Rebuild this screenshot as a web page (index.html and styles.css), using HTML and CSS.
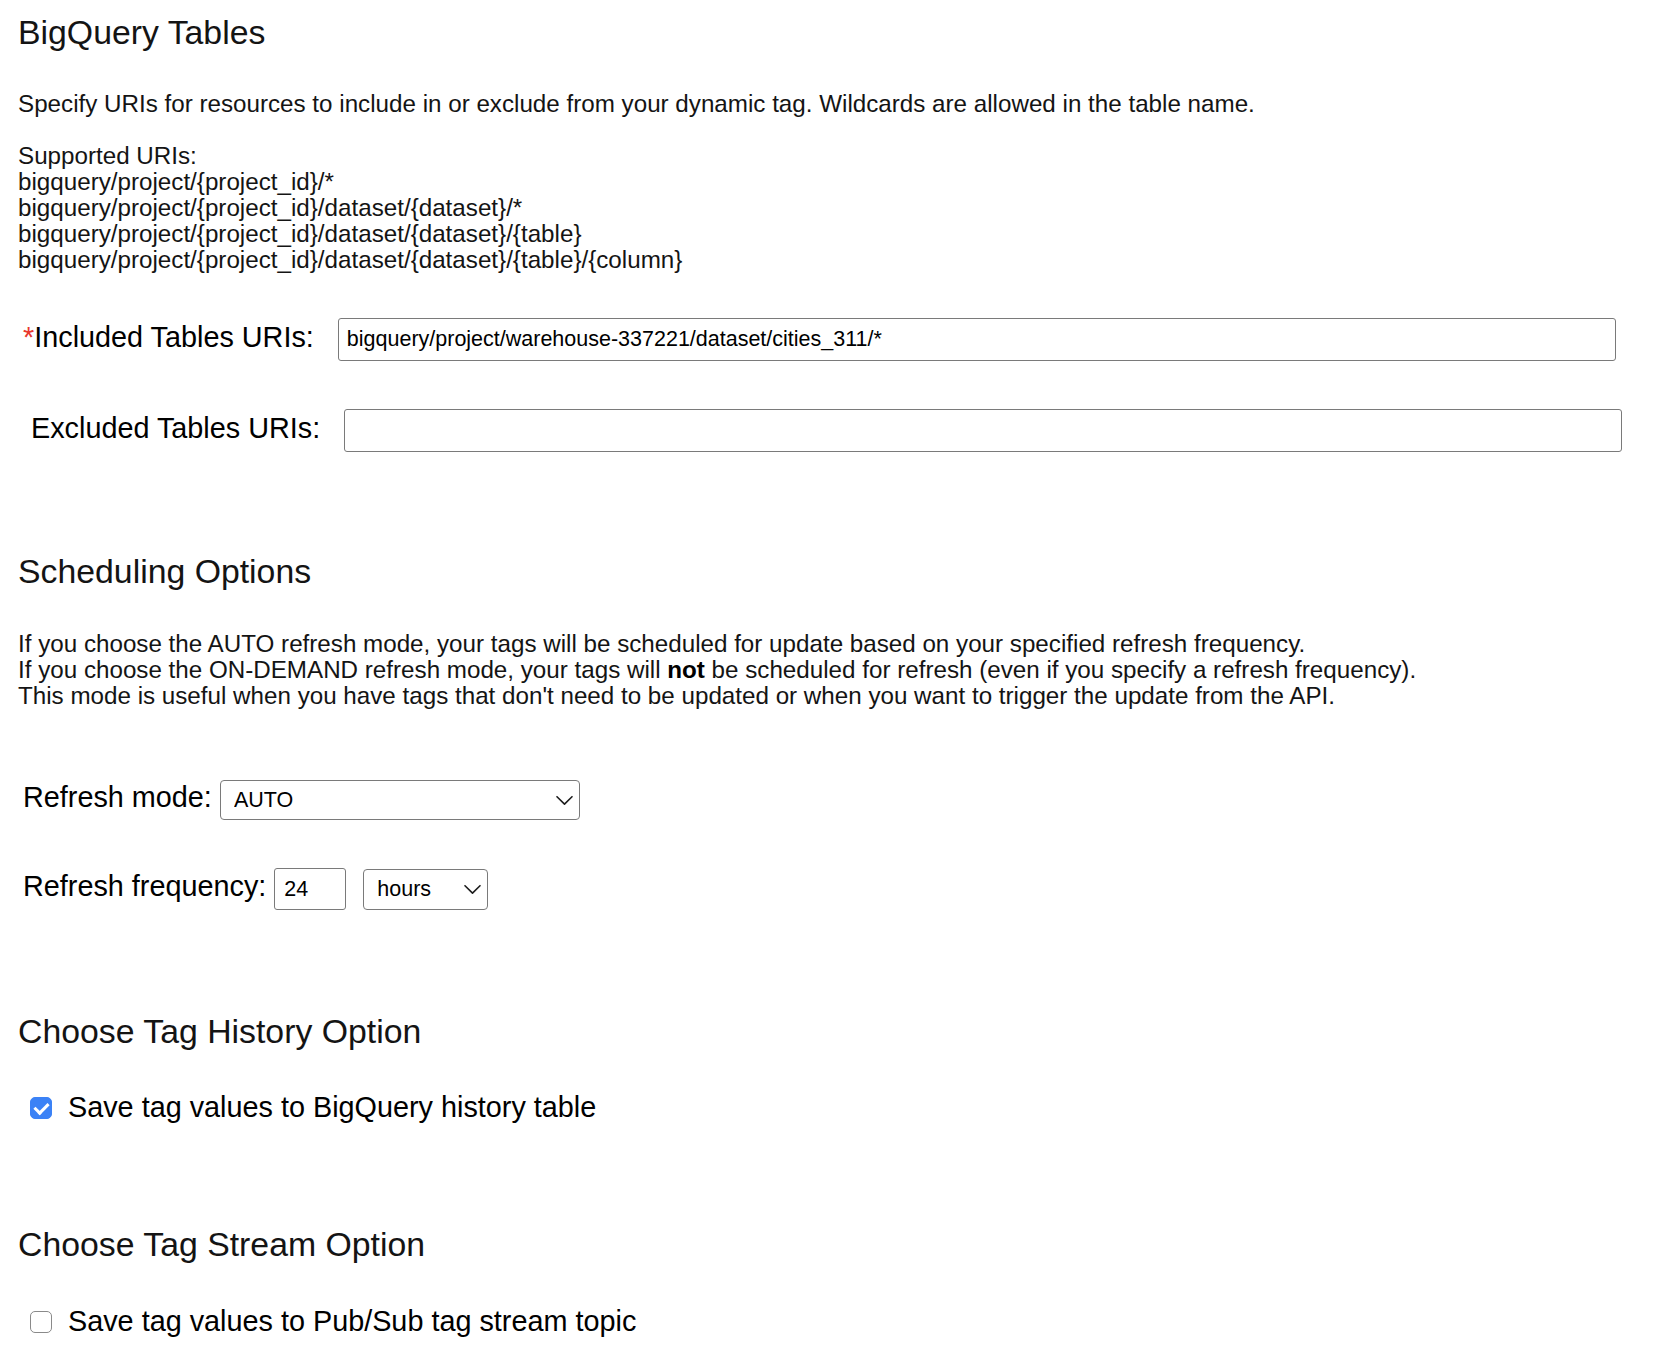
FILE: index.html
```html
<!DOCTYPE html>
<html lang="en">
<head>
<meta charset="utf-8">
<title>BigQuery Tables</title>
<link rel="stylesheet" href="styles.css">
</head>
<body>
<main class="page">
  <section class="section section-tables">
    <h2 class="section-title">BigQuery Tables</h2>
    <p class="section-text">Specify URIs for resources to include in or exclude from your dynamic tag. Wildcards are allowed in the table name.<br><br>Supported URIs:<br>bigquery/project/{project_id}/*<br>bigquery/project/{project_id}/dataset/{dataset}/*<br>bigquery/project/{project_id}/dataset/{dataset}/{table}<br>bigquery/project/{project_id}/dataset/{dataset}/{table}/{column}</p>
    <div class="field-row uri-row uri-row-first">
      <label class="field-label" for="included"><span class="required">*</span>Included Tables URIs:</label>
      <input class="text-input uri-input" id="included" type="text" value="bigquery/project/warehouse-337221/dataset/cities_311/*">
    </div>
    <div class="field-row uri-row">
      <label class="field-label" for="excluded">&nbsp;Excluded Tables URIs:</label>
      <input class="text-input uri-input" id="excluded" type="text" value="">
    </div>
  </section>

  <section class="section section-schedule">
    <h2 class="section-title">Scheduling Options</h2>
    <p class="section-text">If you choose the AUTO refresh mode, your tags will be scheduled for update based on your specified refresh frequency.<br>If you choose the ON-DEMAND refresh mode, your tags will <b>not</b> be scheduled for refresh (even if you specify a refresh frequency).<br>This mode is useful when you have tags that don't need to be updated or when you want to trigger the update from the API.</p>
    <div class="field-row schedule-row schedule-row-first">
      <label class="field-label" for="mode">Refresh mode:</label>
      <span class="select-wrap">
        <select class="select select-mode" id="mode">
          <option selected>AUTO</option>
          <option>ON-DEMAND</option>
        </select>
        <svg class="select-chevron" width="17" height="10" viewBox="0 0 17 10" aria-hidden="true"><path d="M1 1.2 L8.5 8.6 L16 1.2" fill="none" stroke="#1e1e1e" stroke-width="1.6" stroke-linecap="round" stroke-linejoin="round"/></svg>
      </span>
    </div>
    <div class="field-row schedule-row">
      <label class="field-label" for="freq">Refresh frequency:</label>
      <input class="text-input freq-input" id="freq" type="text" value="24">
      <span class="select-wrap">
        <select class="select select-unit" id="unit">
          <option selected>hours</option>
          <option>days</option>
        </select>
        <svg class="select-chevron" width="17" height="10" viewBox="0 0 17 10" aria-hidden="true"><path d="M1 1.2 L8.5 8.6 L16 1.2" fill="none" stroke="#1e1e1e" stroke-width="1.6" stroke-linecap="round" stroke-linejoin="round"/></svg>
      </span>
    </div>
  </section>

  <section class="section section-history">
    <h2 class="section-title">Choose Tag History Option</h2>
    <div class="check-row">
      <input class="checkbox" id="history" type="checkbox" checked>
      <label class="check-label" for="history">Save tag values to BigQuery history table</label>
    </div>
  </section>

  <section class="section section-stream">
    <h2 class="section-title">Choose Tag Stream Option</h2>
    <div class="check-row check-row-stream">
      <input class="checkbox" id="stream" type="checkbox">
      <label class="check-label" for="stream">Save tag values to Pub/Sub tag stream topic</label>
    </div>
  </section>
</main>
</body>
</html>
```

FILE: styles.css
```css
* {
  box-sizing: border-box;
}

html,
body {
  margin: 0;
  background: #ffffff;
}

body {
  font-family: "Liberation Sans", Arial, Helvetica, sans-serif;
  color: #141414;
}

.page {
  padding: 12px 18px 30px;
}

.section-schedule {
  margin-top: 99px;
}

.section-history {
  margin-top: 101px;
}

.section-stream {
  margin-top: 100px;
}

.section-title {
  margin: 0;
  font-size: 33.8px;
  line-height: 40px;
  font-weight: 400;
  color: #141414;
}

.section-text {
  margin: 40px 0 0;
  font-size: 24.2px;
  line-height: 26px;
}

.section-tables .section-text {
  margin-top: 39px;
}

.section-text b {
  font-weight: 700;
  color: #000;
}

.field-row {
  display: flex;
  align-items: center;
  padding-left: 5px;
}

.field-label {
  font-size: 28.8px;
  line-height: 32px;
  padding-bottom: 6px;
  color: #000;
  white-space: pre;
}

.required {
  color: #e8382d;
}

.uri-row {
  margin-top: 48px;
}

.uri-row-first {
  margin-top: 45px;
}

.uri-row .field-label {
  margin-right: 24px;
}

.text-input {
  font-family: "Liberation Sans", Arial, Helvetica, sans-serif;
  font-size: 21.5px;
  color: #000;
  background: #fff;
  border: 1px solid #7a7a7a;
  border-radius: 3px;
  padding: 0 8px;
  margin: 0;
  outline: none;
}

.uri-input {
  width: 1278px;
  height: 43px;
}

.schedule-row {
  margin-top: 48px;
}

.schedule-row-first {
  margin-top: 71px;
}

.schedule-row .field-label {
  margin-right: 8px;
}

.freq-input {
  width: 72px;
  height: 42px;
  padding-left: 9px;
  margin-right: 17px;
}

.select-wrap {
  position: relative;
  display: inline-flex;
}

.select {
  appearance: none;
  -webkit-appearance: none;
  font-family: "Liberation Sans", Arial, Helvetica, sans-serif;
  font-size: 21.5px;
  color: #000;
  background: #fff;
  border: 1px solid #7a7a7a;
  border-radius: 4px;
  padding: 0 36px 0 13px;
  margin: 0;
  outline: none;
}

.select-mode {
  width: 360px;
  height: 40px;
}

.select-unit {
  width: 125px;
  height: 41px;
}

.select-chevron {
  position: absolute;
  right: 7px;
  top: 50%;
  transform: translateY(-45%);
  pointer-events: none;
}

.check-row {
  display: flex;
  align-items: center;
  margin-top: 41px;
  padding-left: 12px;
}

.check-row-stream {
  margin-top: 42px;
}

.checkbox {
  appearance: none;
  -webkit-appearance: none;
  position: relative;
  flex: none;
  width: 22px;
  height: 22px;
  margin: 0 16px 0 0;
  border: 1.5px solid #8a8a8a;
  border-radius: 5px;
  background: #fff;
}

.checkbox:checked {
  background: #3b82f6;
  border-color: #3b82f6;
}

.checkbox:checked::after {
  content: "";
  position: absolute;
  left: 6px;
  top: 2px;
  width: 6px;
  height: 11px;
  border: solid #fff;
  border-width: 0 3px 3px 0;
  transform: rotate(45deg);
}

.check-label {
  font-size: 28.8px;
  line-height: 30px;
  padding-bottom: 2px;
  color: #000;
}
```
